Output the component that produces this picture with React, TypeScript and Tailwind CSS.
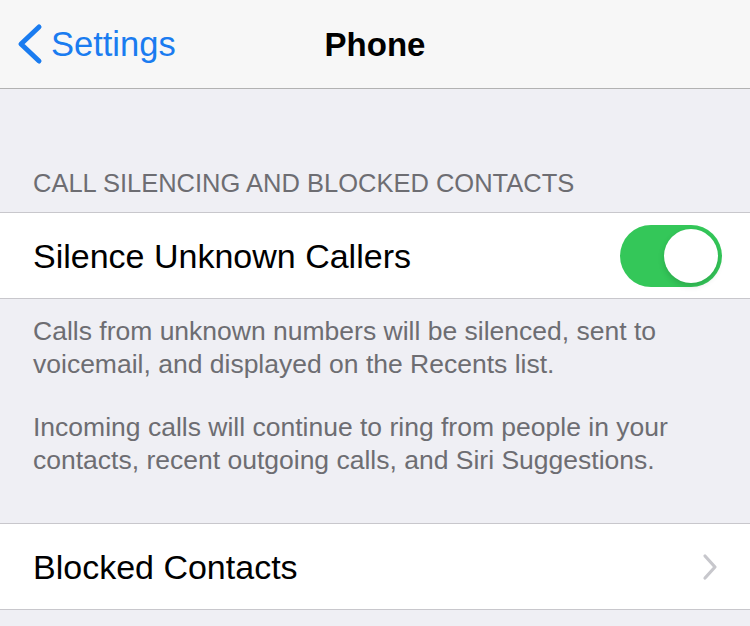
const font = { fontFamily: '"Liberation Sans", Arial, sans-serif' }

function Toggle({ on }: { on: boolean }) {
  return (
    <div className={`relative w-[102px] h-[62px] rounded-full ${on ? "bg-[#34c759]" : "bg-[#e9e9ea]"}`}>
      <div className="absolute right-[4px] top-[4px] w-[54px] h-[54px] rounded-full bg-white shadow-[0_3px_6px_rgba(0,0,0,0.15)]" />
    </div>
  )
}

export default function App() {
  return (
    <div className="w-[750px] h-[626px] overflow-hidden bg-[#efeff4] flex flex-col" style={font}>
      {/* Nav bar */}
      <div className="relative h-[89px] shrink-0 bg-[#f7f7f7] border-b border-[#b2b2b2] flex items-center">
        <div className="flex items-center pl-[16px] text-[#1a7cf0]">
          <svg width="28" height="42" viewBox="0 0 28 42" fill="none">
            <polyline points="23,4 5,21 23,38" stroke="currentColor" strokeWidth="5" strokeLinecap="round" strokeLinejoin="round" />
          </svg>
          <span className="text-[34.5px] leading-none ml-[7px]">Settings</span>
        </div>
        <div className="absolute inset-0 flex items-center justify-center">
          <span className="text-[33px] font-bold text-black leading-none">Phone</span>
        </div>
      </div>

      {/* Section header */}
      <div className="h-[123px] shrink-0 flex items-end px-[33px] pb-[16px]">
        <span className="text-[25.5px] text-[#6d6d72] leading-none">CALL SILENCING AND BLOCKED CONTACTS</span>
      </div>

      <div className="h-[87px] shrink-0 bg-white border-y border-[#c8c7cc] flex items-center justify-between pl-[33px] pr-[28px]">
        <span className="text-[34px] text-black pt-[2px]">Silence Unknown Callers</span>
        <Toggle on />
      </div>

      {/* Footer */}
      <div className="shrink-0 px-[33px] pt-[16px] pb-[46px] text-[26.5px] leading-[33px] text-[#6d6d72]">
        <p>Calls from unknown numbers will be silenced, sent to voicemail, and displayed on the Recents list.</p>
        <p className="mt-[30px]">Incoming calls will continue to ring from people in your contacts, recent outgoing calls, and Siri Suggestions.</p>
      </div>

      <div className="h-[87px] shrink-0 bg-white border-y border-[#c8c7cc] flex items-center justify-between pl-[33px] pr-[32px]">
        <span className="text-[34px] text-black pt-[2px]">Blocked Contacts</span>
        <svg width="16" height="28" viewBox="0 0 16 28" fill="none">
          <polyline points="3,3 13,14 3,25" stroke="#c7c7cc" strokeWidth="3.2" strokeLinecap="round" strokeLinejoin="round" />
        </svg>
      </div>
    </div>
  )
}
